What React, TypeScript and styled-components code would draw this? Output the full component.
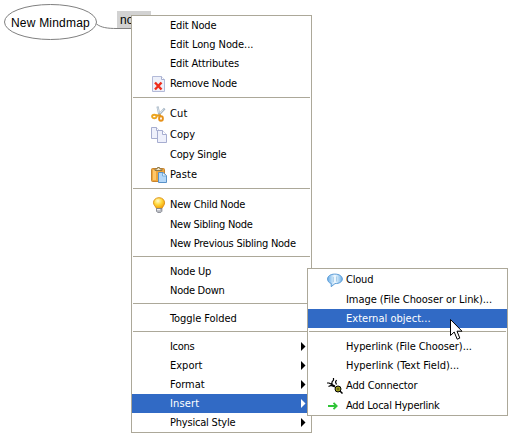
import React from 'react';
import styled, { createGlobalStyle } from 'styled-components';

const GlobalStyle = createGlobalStyle`
  body { margin: 0; background: #fff; overflow: hidden; }
`;

const Canvas = styled.main`
  position: relative;
  width: 510px;
  height: 437px;
  background: #fff;
  color: #000;
  font-family: 'DejaVu Sans Condensed', 'DejaVu Sans', sans-serif;
  font-stretch: condensed;
  font-size: 11px;
  cursor: default;
`;

const Links = styled.svg`
  position: absolute;
  left: 0;
  top: 0;
`;

const MapNode = styled.div<{ $x: number; $y: number; $selected?: boolean }>`
  position: absolute;
  left: ${(p) => p.$x}px;
  top: ${(p) => p.$y}px;
  padding: 0 3px;
  height: 17px;
  line-height: 18px;
  white-space: nowrap;
  font-family: 'Liberation Sans', Arial, sans-serif;
  font-size: 12px;
  letter-spacing: 0.2px;
  background: ${(p) => (p.$selected ? '#d2d2d2' : 'transparent')};
`;

const Menu = styled.div<{ $x: number; $y: number; $width: number }>`
  position: absolute;
  left: ${(p) => p.$x}px;
  top: ${(p) => p.$y}px;
  width: ${(p) => p.$width}px;
  box-sizing: border-box;
  display: flex;
  flex-direction: column;
  background: #fff;
  border: 1px solid #aca899;
`;

const Row = styled.div<{ $tall?: boolean; $active?: boolean }>`
  display: grid;
  grid-template-columns: 19px 19px 1fr 5px;
  align-items: center;
  height: ${(p) => (p.$tall ? 21 : 19)}px;
  padding-right: 5px;
  white-space: nowrap;
  color: ${(p) => (p.$active ? '#fff' : '#000')};
  background: ${(p) => (p.$active ? '#316ac5' : 'transparent')};
`;

const IconSlot = styled.span`
  grid-column: 2;
  display: flex;
  width: 16px;
  height: 16px;
`;

const Label = styled.span<{ $spacing: number }>`
  grid-column: 3;
  line-height: 18px;
  letter-spacing: ${(p) => p.$spacing}px;
`;

const Separator = styled.div`
  height: 1px;
  margin: 3px 1px 5px;
  background: #aca899;
`;

const Pointer = styled.svg`
  position: absolute;
  left: 449px;
  top: 318px;
`;

const Arrow = () => (
  <svg width="5" height="9" viewBox="0 0 5 9" fill="currentColor">
    <path d="M0 0 L4.5 4.5 L0 9 Z" />
  </svg>
);

const RemoveIcon = () => (
  <svg width="16" height="16" viewBox="0 0 16 16">
    <path d="M1.5 .5h9l3 3v12h-12z" fill="#edf0fa" stroke="#b3bad8" />
    <path d="M10.5 .5v3h3" fill="#fff" stroke="#a7afd0" />
    <path d="M4 6.500l6.500 7M10.500 6.500l-6.500 7" stroke="#ee2c1c" strokeWidth="2.400" />
  </svg>
);

const CutIcon = () => (
  <svg width="16" height="16" viewBox="0 0 16 16" fill="none">
    <path d="M6.500 .5L8.200 8M13.700 2.500L7.700 9" stroke="#a9b8c6" strokeWidth="2.200" />
    <path d="M6.700 1.500L8 7M12.500 3.500L9 7" stroke="#e4edf5" strokeWidth=".8" />
    <path d="M5 9.500L10 9.500" stroke="#e69a16" strokeWidth="2.200" />
    <ellipse cx="3.300" cy="10.500" rx="2.200" ry="1.800" stroke="#eca51e" strokeWidth="1.900" />
    <ellipse cx="10" cy="12.500" rx="1.900" ry="2.300" stroke="#e6911a" strokeWidth="1.900" />
  </svg>
);

const CopyIcon = () => (
  <svg width="16" height="16" viewBox="0 0 16 16" fill="#eef0fb" stroke="#a6add0">
    <path d="M.5 .5h5l3 3v8h-8z" />
    <path d="M5.500 .5v3h3" fill="#fff" />
    <path d="M6.500 3.500h5l4 4v8h-9z" />
    <path d="M11.500 3.500v4h4" fill="#fff" />
  </svg>
);

const PasteIcon = () => (
  <svg width="16" height="16" viewBox="0 0 16 16">
    <rect x=".5" y="1.500" width="13" height="13" rx="1" fill="#efa63b" stroke="#c8842e" />
    <path d="M2 3h3v10H2z" fill="#ffc76b" />
    <path d="M4 3.500V2h2l.5-1.500h2L9 2h2v1.500z" fill="#eee4c9" stroke="#8f7746" />
    <path d="M7.500 5.500h4.500l3.500 3v7h-8z" fill="#b5d8f9" stroke="#5a92c8" />
    <path d="M11.500 6v3h3.500" fill="#e9f6ff" stroke="#7aaedb" />
  </svg>
);

const BulbIcon = () => (
  <svg width="16" height="16" viewBox="0 0 16 16">
    <defs>
      <radialGradient id="bulb" cx=".4" cy=".3" r=".7">
        <stop stopColor="#fffbd0" />
        <stop offset=".5" stopColor="#ffd83b" />
        <stop offset="1" stopColor="#f2a009" />
      </radialGradient>
    </defs>
    <path d="M8 .7c3.500 0 5.600 2.300 5.600 5.200 0 2.400-2 3.500-2.600 5.600H5.400C4.800 9.400 2.500 8.200 2.500 5.800 2.500 3 4.600.7 8 .7z" fill="url(#bulb)" stroke="#dd8e12" strokeWidth=".9" />
    <path d="M5.500 11.500h5.400v2.800l-1.300 1.300H6.800l-1.300-1.300z" fill="#b8bbc2" stroke="#777b85" strokeWidth=".8" />
    <path d="M6 12.700h3" stroke="#fff" />
  </svg>
);

const CloudIcon = () => (
  <svg width="16" height="16" viewBox="0 0 16 16">
    <defs>
      <linearGradient id="bubble">
        <stop stopColor="#6aaee8" />
        <stop offset=".5" stopColor="#f4fbff" />
        <stop offset="1" stopColor="#6fb1e8" />
      </linearGradient>
    </defs>
    <path d="M4.200 11.400C1.700 10.800.6 9 .6 7c0-2.700 2.600-4.900 7.200-4.900S15.300 4.300 15.300 7c0 2.800-2.900 4.600-7.300 4.600L4.200 14.700z" fill="url(#bubble)" stroke="#5b9bd6" />
    <path d="M6.300 5v5M9.500 4.500v5" stroke="#a8cde9" />
  </svg>
);

const ConnectorIcon = () => (
  <svg width="16" height="16" viewBox="0 0 16 16" fill="none" stroke="#000">
    <path d="M6.500 0v2L5 4v2.500L8 8M9.500 2L8.500 4l1 2.500M0 5h2l3 1.500M1.500 8.500L4 7.500l4 1.500" strokeWidth="1.200" />
    <circle cx="11" cy="11" r="3" fill="#99991d" strokeWidth="1" />
    <path d="M10 11h2" stroke="#3c3c08" />
    <path d="M13 13l2.500 2.500" strokeWidth="1.500" />
  </svg>
);

const LinkIcon = () => (
  <svg width="16" height="16" viewBox="0 0 16 16" fill="none" stroke="#2fc436" strokeWidth="1.800">
    <path d="M1 8h8.500M6.500 4.800L9.700 8l-3.200 3.200" />
  </svg>
);

type Entry =
  | { kind: 'separator' }
  | {
      kind: 'item';
      label: string;
      spacing: number;
      icon?: React.ReactNode;
      short?: boolean;
      submenu?: boolean;
      active?: boolean;
    };

const separator: Entry = { kind: 'separator' };
const item = (label: string, spacing = -0.3, extra: object = {}): Entry => ({
  kind: 'item',
  label,
  spacing,
  ...extra,
});

const nodeMenu: Entry[] = [
  item('Edit Node', -0.2),
  item('Edit Long Node...', -0.08),
  item('Edit Attributes', -0.15),
  item('Remove Node', -0.2, { icon: <RemoveIcon /> }),
  separator,
  item('Cut', 0.1, { icon: <CutIcon /> }),
  item('Copy', 0, { icon: <CopyIcon /> }),
  item('Copy Single', -0.2),
  item('Paste', 0.1, { icon: <PasteIcon /> }),
  separator,
  item('New Child Node', -0.25, { icon: <BulbIcon /> }),
  item('New Sibling Node', -0.28),
  item('New Previous Sibling Node', -0.25),
  separator,
  item('Node Up', -0.2),
  item('Node Down', -0.27),
  separator,
  item('Toggle Folded', -0.06),
  separator,
  item('Icons', -0.3, { submenu: true }),
  item('Export', 0, { submenu: true }),
  item('Format', -0.05, { submenu: true }),
  item('Insert', 0.15, { submenu: true, active: true }),
  item('Physical Style', -0.2, { submenu: true }),
];

const insertMenu: Entry[] = [
  item('Cloud', -0.2, { icon: <CloudIcon /> }),
  item('Image (File Chooser or Link)...', -0.07),
  item('External object...', 0.03, { active: true }),
  separator,
  item('Hyperlink (File Chooser)...', -0.07),
  item('Hyperlink (Text Field)...', 0),
  item('Add Connector', -0.15, { icon: <ConnectorIcon /> }),
  item('Add Local Hyperlink', -0.25, { icon: <LinkIcon />, short: true }),
];

const renderEntry = (entry: Entry, index: number) =>
  entry.kind === 'separator' ? (
    <Separator key={index} />
  ) : (
    <Row key={index} $tall={!!entry.icon && !entry.short} $active={entry.active}>
      {entry.icon && <IconSlot>{entry.icon}</IconSlot>}
      <Label $spacing={entry.spacing}>{entry.label}</Label>
      {entry.submenu && <Arrow />}
    </Row>
  );

export default function App() {
  return (
    <>
      <GlobalStyle />
      <Canvas>
        <Links width="140" height="45" fill="none" stroke="#808080">
          <ellipse cx="50.5" cy="22" rx="46" ry="17.500" />
          <path d="M96.500 24C101 27.500 107 28.500 117 28.500H132" />
        </Links>
        <MapNode $x={8} $y={14}>New Mindmap</MapNode>
        <MapNode $x={117} $y={11} $selected>node</MapNode>
        <Menu $x={131} $y={15} $width={181}>{nodeMenu.map(renderEntry)}</Menu>
        <Menu $x={307} $y={268} $width={201}>{insertMenu.map(renderEntry)}</Menu>
        <Pointer width="15" height="24" viewBox="-1 -1 15 24">
          <path d="M.5 .5V16.500L4.200 13l3 7.200 2.600-1.100L7 12.200h5z" fill="#fff" stroke="#000" />
        </Pointer>
      </Canvas>
    </>
  );
}
